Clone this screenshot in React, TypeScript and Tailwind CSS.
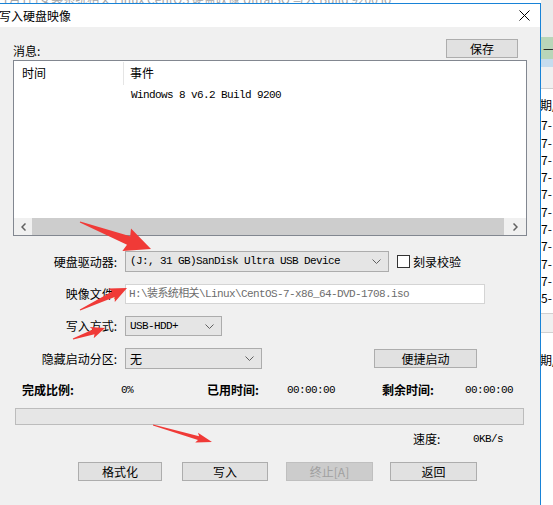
const ARROWS = [
  { x1: 80, y1: 222, x2: 151, y2: 249, shaft: 9, headW: 24, headL: 24 },
  { x1: 80, y1: 310, x2: 127, y2: 288, shaft: 6, headW: 15, headL: 15 },
  { x1: 73, y1: 339, x2: 105, y2: 328, shaft: 5, headW: 12, headL: 12 },
  { x1: 153, y1: 425, x2: 212, y2: 442, shaft: 4, headW: 10, headL: 14 },
]

function arrowPoints(a: (typeof ARROWS)[number]) {
  const dx = a.x2 - a.x1
  const dy = a.y2 - a.y1
  const len = Math.hypot(dx, dy)
  const ux = dx / len
  const uy = dy / len
  const nx = -uy
  const ny = ux
  const bx = a.x2 - ux * a.headL
  const by = a.y2 - uy * a.headL
  const p = [
    [a.x1 + nx * 0.5, a.y1 + ny * 0.5],
    [bx + nx * a.shaft / 2, by + ny * a.shaft / 2],
    [bx + nx * a.headW / 2 - ux * 2, by + ny * a.headW / 2 - uy * 2],
    [a.x2, a.y2],
    [bx - nx * a.headW / 2 - ux * 2, by - ny * a.headW / 2 - uy * 2],
    [bx - nx * a.shaft / 2, by - ny * a.shaft / 2],
    [a.x1 - nx * 0.5, a.y1 - ny * 0.5],
  ]
  return p.map(([x, y]) => `${x.toFixed(1)},${y.toFixed(1)}`).join(' ')
}

function Chevron() {
  return (
    <svg width="9" height="5" viewBox="0 0 9 5" className="shrink-0">
      <polyline points="0.5,0.5 4.5,4.5 8.5,0.5" fill="none" stroke="#606060" strokeWidth="1" />
    </svg>
  )
}

function Combo({ text, width }: { text: string; width: string }) {
  return (
    <div className={`${width} h-full flex items-center justify-between pl-[4px] pr-[7px] bg-[#e5e5e5] border border-[#acacac]`}>
      <span className="font-['Liberation_Mono','Noto_Sans_CJK_SC',monospace] text-[11px] tracking-[-0.6px] leading-none text-black whitespace-nowrap">
        {text}
      </span>
      <Chevron />
    </div>
  )
}

function Button({ label, width, disabled }: { label: string; width: string; disabled?: boolean }) {
  return (
    <div
      className={`${width} h-[19px] flex items-center justify-center border leading-none ${
        disabled ? 'bg-[#cccccc] border-[#bfbfbf] text-[#a0a0a0]' : 'bg-[#e1e1e1] border-[#adadad] text-black'
      }`}
    >
      {label}
    </div>
  )
}

const mono = "font-['Liberation_Mono','Noto_Sans_CJK_SC',monospace] text-[11px] tracking-[-0.6px] leading-none"

export default function App() {
  return (
    <div className="relative w-[553px] h-[505px] overflow-hidden flex bg-[#f0f0f0] font-['Noto_Sans_CJK_SC',sans-serif] text-[12px] text-black">
      {/* Dialog */}
      <div className="w-[541px] shrink-0 flex flex-col">
        <div className="h-[3px] overflow-hidden bg-white">
          <div className="-mt-[10px] pl-[2px] text-[12px] text-[#a5a5a5] whitespace-nowrap">
            1月1日安装系统相关 Linux CentOS 硬盘映像 UltraISO 写入 Build 9200 lo
          </div>
        </div>
        <div className="flex-1 flex flex-col border-t border-r border-[#1883d7]">
          {/* Title bar */}
          <div className="h-[23px] bg-white flex items-center justify-between">
            <span className="leading-none -ml-[1px]">写入硬盘映像</span>
            <svg width="11" height="11" viewBox="0 0 11 11" className="mr-[10px]">
              <path d="M0.5 0.5 L10.5 10.5 M10.5 0.5 L0.5 10.5" stroke="#000" strokeWidth="1" />
            </svg>
          </div>

          {/* Body */}
          <div className="flex-1 flex flex-col pt-[12px]">
            <div className="h-[19px] flex items-center justify-between pl-[13px] pr-[22px]">
              <span className="leading-none mt-[4px]">消息:</span>
              <Button label="保存" width="w-[72px]" />
            </div>

            {/* Log list */}
            <div className="mt-[2px] ml-[13px] w-[514px] h-[176px] border border-[#828790] bg-white flex flex-col">
              <div className="h-[24px] flex items-center">
                <div className="w-[110px] h-[23px] pl-[8px] flex items-center border-r border-[#e5e5e5]">时间</div>
                <div className="pl-[6px]">事件</div>
              </div>
              <div className={`${mono} ml-[117px] mt-[5px]`}>Windows 8 v6.2 Build 9200</div>
              <div className="flex-1" />
              <div className="h-[17px] flex">
                <div className="w-[18px] flex items-center justify-center bg-[#f0f0f0]">
                  <svg width="5" height="8" viewBox="0 0 5 8">
                    <polyline points="4.5,0.5 1,4 4.5,7.5" fill="none" stroke="#606060" strokeWidth="1.5" />
                  </svg>
                </div>
                <div className="flex-1 bg-[#cdcdcd]" />
                <div className="w-[22px] flex items-center justify-center bg-[#f0f0f0]">
                  <svg width="5" height="8" viewBox="0 0 5 8">
                    <polyline points="0.5,0.5 4,4 0.5,7.5" fill="none" stroke="#606060" strokeWidth="1.5" />
                  </svg>
                </div>
              </div>
            </div>

            {/* Drive */}
            <div className="mt-[15px] h-[21px] flex items-center">
              <span className="w-[117px] text-right leading-none">硬盘驱动器:</span>
              <div className="ml-[8px] h-full flex">
                <Combo text="(J:, 31 GB)SanDisk Ultra USB Device" width="w-[264px]" />
              </div>
              <div className="ml-[8px] w-[13px] h-[13px] border border-[#333] bg-white" />
              <span className="ml-[3px] leading-none">刻录校验</span>
            </div>

            {/* Image file */}
            <div className="mt-[12px] h-[20px] flex items-center">
              <span className="w-[117px] text-right leading-none">映像文件:</span>
              <div className="ml-[8px] w-[360px] h-full flex items-center pl-[3px] bg-white border border-[#d4d4d4]">
                <span className={`${mono} text-[#6d6d6d] whitespace-nowrap`}>
                  H:\装系统相关\Linux\CentOS-7-x86_64-DVD-1708.iso
                </span>
              </div>
            </div>

            {/* Write method */}
            <div className="mt-[12px] h-[20px] flex items-center">
              <span className="w-[117px] text-right leading-none">写入方式:</span>
              <div className="ml-[8px] h-full flex">
                <Combo text="USB-HDD+" width="w-[97px]" />
              </div>
            </div>

            {/* Hidden partition */}
            <div className="mt-[12px] h-[21px] flex items-start">
              <span className="w-[117px] h-full flex items-center justify-end leading-none">隐藏启动分区:</span>
              <div className="ml-[8px] h-full flex">
                <div className="w-[137px] h-full flex items-center justify-between pl-[4px] pr-[7px] bg-[#e5e5e5] border border-[#acacac]">
                  <span className="leading-none">无</span>
                  <Chevron />
                </div>
              </div>
              <div className="ml-[112px] mt-[1px]">
                <Button label="便捷启动" width="w-[103px]" />
              </div>
            </div>

            {/* Stats */}
            <div className="mt-[13px] h-[16px] flex items-center whitespace-nowrap">
              <span className="pl-[22px] w-[121px] font-semibold leading-none">完成比例:</span>
              <span className={`${mono} w-[86px]`}>0%</span>
              <span className="w-[80px] font-semibold leading-none">已用时间:</span>
              <span className={`${mono} w-[95px]`}>00:00:00</span>
              <span className="w-[83px] font-semibold leading-none">剩余时间:</span>
              <span className={mono}>00:00:00</span>
            </div>

            {/* Progress */}
            <div className="mt-[10px] ml-[15px] w-[509px] h-[17px] bg-[#e6e6e6] border border-[#bcbcbc]" />

            {/* Speed */}
            <div className="mt-[6px] h-[16px] flex items-center pl-[413px] whitespace-nowrap">
              <span className="w-[60px] leading-none">速度:</span>
              <span className={mono}>0KB/s</span>
            </div>

            {/* Buttons */}
            <div className="mt-[15px] flex pl-[78px]">
              <Button label="格式化" width="w-[84px]" />
              <div className="ml-[20px]">
                <Button label="写入" width="w-[86px]" />
              </div>
              <div className="ml-[18px]">
                <Button label="终止[A]" width="w-[87px]" disabled />
              </div>
              <div className="ml-[17px]">
                <Button label="返回" width="w-[87px]" />
              </div>
            </div>
          </div>
        </div>
      </div>

      {/* Window behind, peeking out on the right */}
      <div className="flex-1 flex flex-col overflow-hidden">
        <div className="h-[37px] bg-[#ebebeb]" />
        <div className="h-[22px] bg-[#b9d6b9] flex items-center pl-[2px] leading-none">—</div>
        <div className="h-[8px] bg-[#c5dcee]" />
        <div className="h-[22px] bg-[#f0f0f0] border-b border-[#d0d0d0]" />
        <div className="flex-1 bg-white flex flex-col whitespace-nowrap text-[12px] leading-[17.3px] pt-[7px]">
          <span className="-ml-[13px]">日期/</span>
          <span className="mt-[3px]">7-</span>
          <span>7-</span>
          <span>7-</span>
          <span>7-</span>
          <span>7-</span>
          <span>7-</span>
          <span>7-</span>
          <span>7-</span>
          <span>7-</span>
          <span>7-</span>
          <span>5-</span>
          <div className="mt-[6px] h-[20px] bg-[#f0f0f0] border-y border-[#d0d0d0]" />
          <span className="mt-[18px] -ml-[13px]">日期/</span>
        </div>
      </div>

      {/* Red annotation arrows */}
      <svg className="absolute inset-0 pointer-events-none" width="553" height="505" viewBox="0 0 553 505">
        {ARROWS.map((a, i) => (
          <polygon key={i} points={arrowPoints(a)} fill="#f03a37" />
        ))}
      </svg>
    </div>
  )
}
